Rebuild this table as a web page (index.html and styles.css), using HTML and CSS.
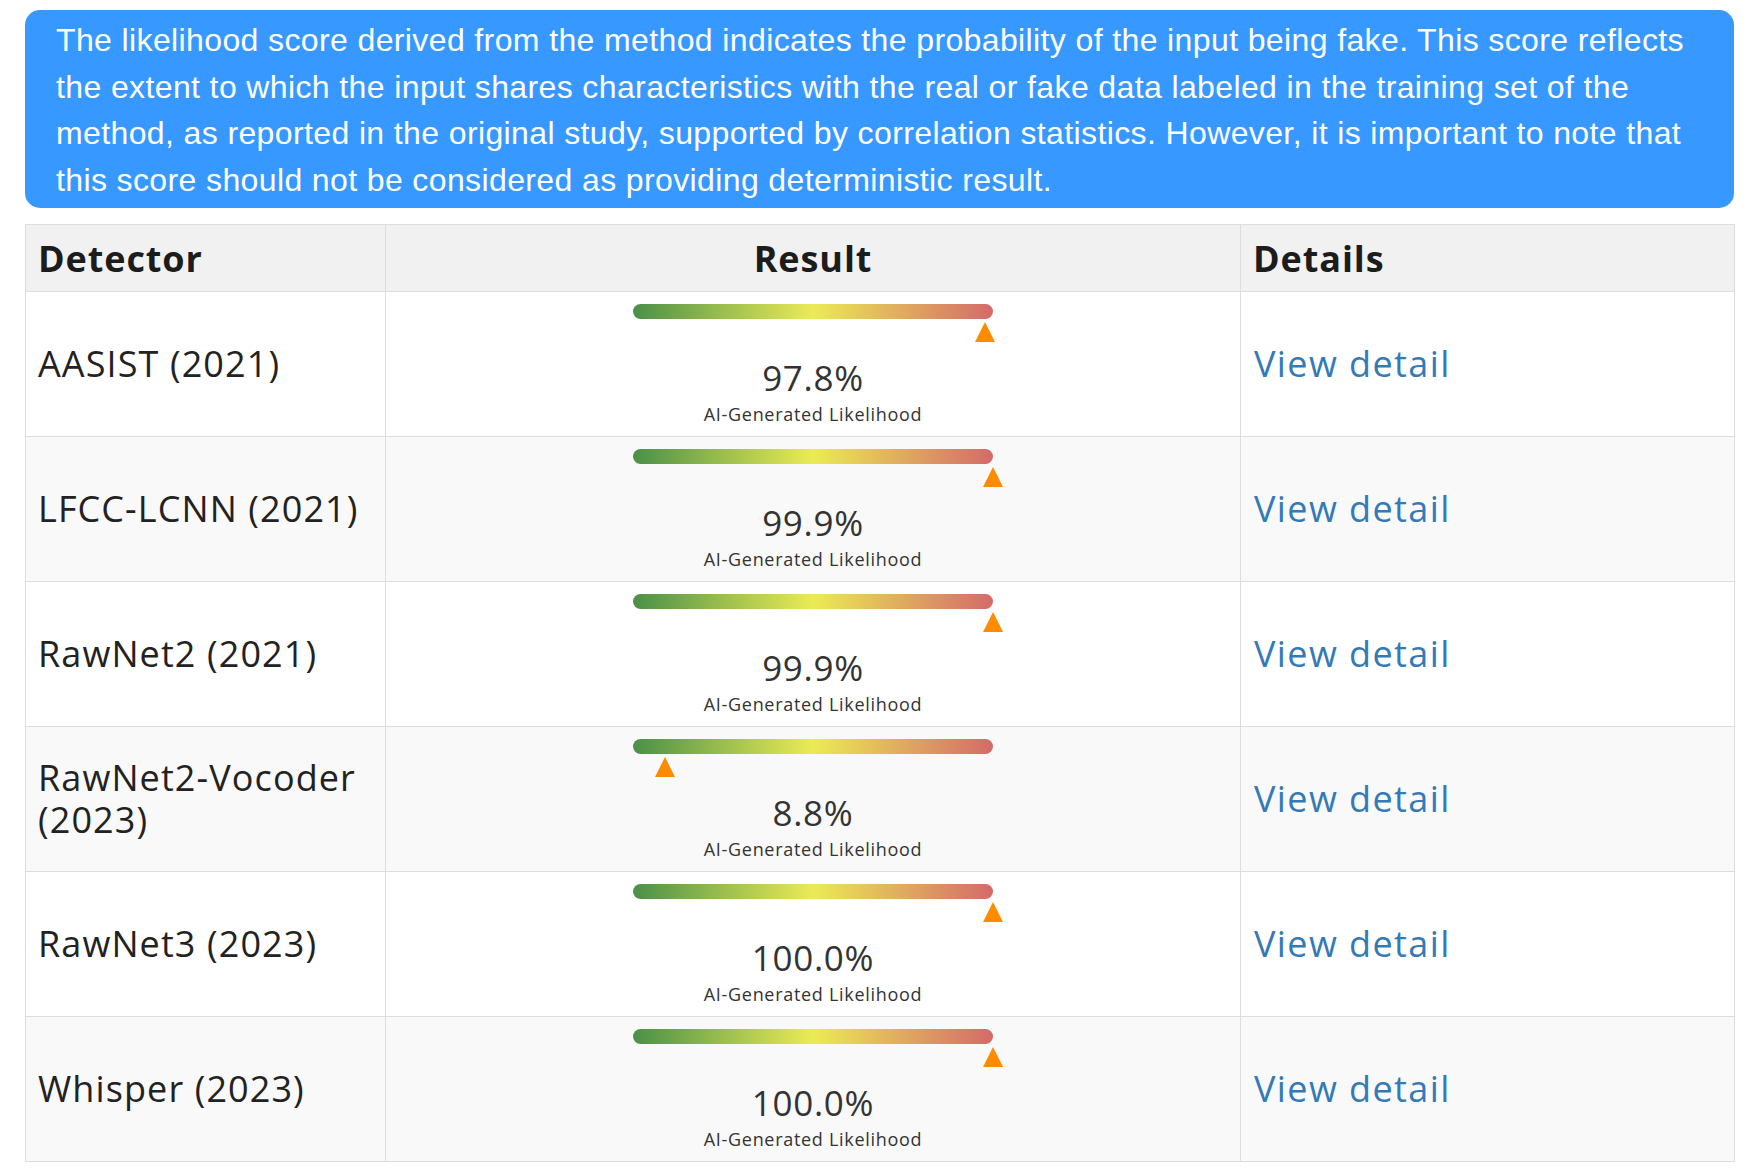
FILE: index.html
```html
<!DOCTYPE html>
<html lang="en">
<head>
<meta charset="utf-8">
<title>Detector results</title>
<link rel="stylesheet" href="styles.css">
</head>
<body>
<div class="page">
  <div class="notice">The likelihood score derived from the method indicates the probability of the input being fake. This score reflects the extent to which the input shares characteristics with the real or fake data labeled in the training set of the method, as reported in the original study, supported by correlation statistics. However, it is important to note that this score should not be considered as providing deterministic result.</div>
  <table class="results">
    <colgroup>
      <col class="c-det">
      <col class="c-res">
      <col class="c-dtl">
    </colgroup>
    <thead>
      <tr>
        <th class="h-left">Detector</th>
        <th class="h-center">Result</th>
        <th class="h-left">Details</th>
      </tr>
    </thead>
    <tbody>
      <tr>
        <td class="det">AASIST (2021)</td>
        <td class="res"><div class="gauge"><div class="bar"></div><div class="track"><span class="marker" style="left:97.8%"></span></div></div><div class="pct">97.8%</div><div class="lbl">AI-Generated Likelihood</div></td>
        <td class="dtl"><a href="#">View detail</a></td>
      </tr>
      <tr>
        <td class="det">LFCC-LCNN (2021)</td>
        <td class="res"><div class="gauge"><div class="bar"></div><div class="track"><span class="marker" style="left:99.9%"></span></div></div><div class="pct">99.9%</div><div class="lbl">AI-Generated Likelihood</div></td>
        <td class="dtl"><a href="#">View detail</a></td>
      </tr>
      <tr>
        <td class="det">RawNet2 (2021)</td>
        <td class="res"><div class="gauge"><div class="bar"></div><div class="track"><span class="marker" style="left:99.9%"></span></div></div><div class="pct">99.9%</div><div class="lbl">AI-Generated Likelihood</div></td>
        <td class="dtl"><a href="#">View detail</a></td>
      </tr>
      <tr>
        <td class="det">RawNet2-Vocoder (2023)</td>
        <td class="res"><div class="gauge"><div class="bar"></div><div class="track"><span class="marker" style="left:8.8%"></span></div></div><div class="pct">8.8%</div><div class="lbl">AI-Generated Likelihood</div></td>
        <td class="dtl"><a href="#">View detail</a></td>
      </tr>
      <tr>
        <td class="det">RawNet3 (2023)</td>
        <td class="res"><div class="gauge"><div class="bar"></div><div class="track"><span class="marker" style="left:100%"></span></div></div><div class="pct">100.0%</div><div class="lbl">AI-Generated Likelihood</div></td>
        <td class="dtl"><a href="#">View detail</a></td>
      </tr>
      <tr>
        <td class="det">Whisper (2023)</td>
        <td class="res"><div class="gauge"><div class="bar"></div><div class="track"><span class="marker" style="left:100%"></span></div></div><div class="pct">100.0%</div><div class="lbl">AI-Generated Likelihood</div></td>
        <td class="dtl"><a href="#">View detail</a></td>
      </tr>
    </tbody>
  </table>
</div>
</body>
</html>
```

FILE: styles.css
```css
html, body {
  margin: 0;
  padding: 0;
  background: #ffffff;
}

.page {
  padding: 10px 17px 0 25px;
}

.notice {
  background: #3799ff;
  color: #ffffff;
  font-family: "Liberation Sans", Arial, sans-serif;
  font-size: 32px;
  letter-spacing: 0.38px;
  line-height: 46.5px;
  padding: 7px 31px 5px 31px;
  border-radius: 15px;
}

.results {
  margin-top: 16px;
  width: 1709px;
  table-layout: fixed;
  border-collapse: collapse;
  font-family: "Open Sans", "DejaVu Sans", sans-serif;
  color: #222222;
  letter-spacing: 0.7px;
}

.c-det { width: 360px; }
.c-res { width: 855px; }
.c-dtl { width: 494px; }

.results th,
.results td {
  border: 1px solid #dddddd;
}

.results th {
  background: #f1f1f1;
  font-size: 36px;
  font-weight: 700;
  line-height: 49px;
  padding: 9px 12px 8px 12px;
  color: #1c1c1c;
  letter-spacing: 0.9px;
}

.h-left { text-align: left; }
.h-center { text-align: center; }

.results tbody tr:nth-child(even) td {
  background: #f9f9f9;
}

.det {
  font-size: 36px;
  line-height: 42px;
  padding: 0 12px;
  vertical-align: middle;
  letter-spacing: 1.1px;
}

.dtl {
  font-size: 36px;
  line-height: 42px;
  padding: 0 13px;
  vertical-align: middle;
  letter-spacing: 1.4px;
}

.dtl a {
  color: #337ab7;
  text-decoration: none;
}

.res {
  padding: 12px 12px 10px 12px;
  text-align: center;
  vertical-align: top;
  color: #333333;
}

.gauge {
  width: 360px;
  margin: 0 auto;
}

.bar {
  height: 15px;
  border-radius: 8px;
  background: linear-gradient(to right, #4a9048 0%, #9bbe4e 25%, #ebeb55 50%, #e0aa5f 75%, #d46a6a 100%);
}

.track {
  position: relative;
  height: 20px;
  margin-top: 3px;
}

.marker {
  position: absolute;
  top: 0;
  width: 0;
  height: 0;
  margin-left: -10px;
  border-left: 10px solid transparent;
  border-right: 10px solid transparent;
  border-bottom: 20px solid #ff8c00;
}

.pct {
  margin-top: 12px;
  font-size: 35px;
  line-height: 48px;
}

.lbl {
  font-size: 18px;
  line-height: 24px;
}
```
